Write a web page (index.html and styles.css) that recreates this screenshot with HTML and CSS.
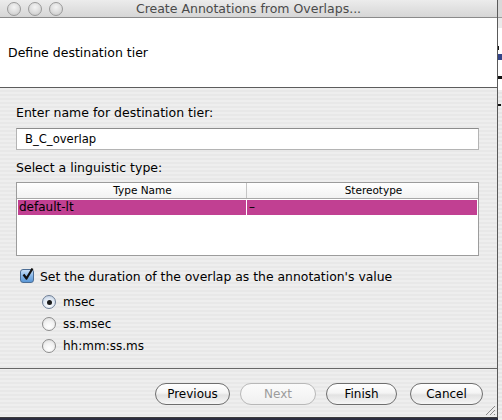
FILE: index.html
```html
<!DOCTYPE html>
<html>
<head>
<meta charset="utf-8">
<link rel="stylesheet" href="styles.css">
</head>
<body>
<div class="screen">
  <div class="window">
    <div class="titlebar">
      <div class="lights">
        <span class="light"></span><span class="light"></span><span class="light"></span>
      </div>
      <div class="title">Create Annotations from Overlaps...</div>
      <div></div>
    </div>
    <div class="header"><span>Define destination tier</span></div>
    <div class="content">
      <div class="label">Enter name for destination tier:</div>
      <div class="field">B_C_overlap</div>
      <div class="label label-second">Select a linguistic type:</div>
      <div class="table">
        <div class="thead">
          <div class="th c1">Type Name</div>
          <div class="th c2">Stereotype</div>
        </div>
        <div class="tbody">
          <div class="row selected">
            <div class="td c1">default-lt</div>
            <div class="td c2">–</div>
          </div>
        </div>
      </div>
      <div class="check-row">
        <span class="checkbox"><svg width="16" height="16" viewBox="0 0 16 16"><path d="M3.5 7.5 L6.5 11.5 L12.5 1.5" fill="none" stroke="#111" stroke-width="2.2" stroke-linejoin="round"/></svg></span>
        <span>Set the duration of the overlap as the annotation's value</span>
      </div>
      <div class="radios">
        <div class="radio-row"><span class="radio on"><span class="dot"></span></span><span>msec</span></div>
        <div class="radio-row"><span class="radio"></span><span>ss.msec</span></div>
        <div class="radio-row"><span class="radio"></span><span>hh:mm:ss.ms</span></div>
      </div>
    </div>
    <div class="footer">
      <button class="btn b-prev">Previous</button>
      <button class="btn b-next" disabled>Next</button>
      <button class="btn b-finish">Finish</button>
      <button class="btn b-cancel">Cancel</button>
      <span class="grip"><svg width="12" height="12" viewBox="0 0 12 12"><path d="M11 2 L2 11 M11 6 L6 11 M11 10 L10 11" stroke="#8a8a8a" stroke-width="1"/></svg></span>
    </div>
  </div>
  <div class="behind">
    <div class="bh-top"></div>
    <div class="bh-white">
      <span class="mk mk1"></span>
      <span class="mk mk2"></span>
      <span class="mk mk3"></span>
    </div>
    <div class="bh-rest">
      <span class="mk mk4"></span>
    </div>
  </div>
</div>
</body>
</html>
```
FILE: styles.css
```css
* { box-sizing: border-box; }
html, body { margin: 0; padding: 0; }
body {
  width: 502px;
  height: 420px;
  overflow: hidden;
  background: #2a2c3e;
  font-family: "DejaVu Sans", sans-serif;
  color: #000;
}
.screen { display: flex; width: 502px; height: 420px; }
.window {
  width: 498px;
  height: 418px;
  display: flex;
  flex-direction: column;
  border-right: 1px solid #5a5a5a;
  border-bottom: 1px solid #3c3c3c;
  background: repeating-linear-gradient(to bottom, #eeeeee 0 2px, #e8e8e8 2px 4px);
}
.titlebar {
  height: 18px;
  flex: none;
  display: grid;
  grid-template-columns: 1fr auto 1fr;
  align-items: center;
  border-bottom: 1px solid #8a8a8a;
  background: linear-gradient(to bottom, #ececec, #d6d6d6);
}
.lights { display: flex; gap: 7px; padding-left: 7px; }
.light {
  width: 14px;
  height: 14px;
  border-radius: 50%;
  border: 1px solid #9a9a9a;
  background: radial-gradient(circle at 50% 35%, #f4f4f4 0, #dcdcdc 55%, #c4c4c4 100%);
}
.title {
  font-size: 12.5px;
  color: #4a4a4a;
  white-space: nowrap;
}
.header {
  height: 70px;
  flex: none;
  background: #fff;
  border-bottom: 1px solid #5c5c5c;
  display: flex;
  align-items: center;
  padding-left: 8px;
  font-size: 12.5px;
}
.content {
  flex: 1;
  border-bottom: 1px solid #666;
  padding: 17px 18px 0 16px;
  display: flex;
  flex-direction: column;
  font-size: 12px;
}
.label { font-size: 12.5px; line-height: 16px; }
.label-second { margin-top: 10px; }
.field {
  margin-top: 7px;
  height: 22px;
  background: #fff;
  border: 1px solid #b4b4b4;
  border-top-color: #8c8c8c;
  padding-left: 8px;
  line-height: 20px;
  font-size: 11.6px;
}
.table {
  margin-top: 6px;
  height: 74px;
  background: #fff;
  border: 1px solid #9c9c9c;
  display: flex;
  flex-direction: column;
}
.thead {
  display: flex;
  height: 16px;
  border-bottom: 1px solid #a8a8a8;
  background: linear-gradient(to bottom, #ffffff, #f2f2f2);
  font-size: 10.5px;
  line-height: 15px;
}
.th { text-align: center; padding-left: 22px; }
.c1 { width: 230px; flex: none; }
.c2 { flex: 1; }
.th.c1 { border-right: 1px solid #c4c4c4; }
.tbody { padding: 1px 1px 0 1px; }
.row { display: flex; height: 15px; gap: 1px; }
.td { line-height: 15px; padding-left: 1px; font-size: 12px; }
.td.c1 { width: 228px; }
.td.c2 { padding-left: 2px; }
.selected .td { background: #c14092; color: #000; }
.check-row {
  margin-top: 12px;
  display: flex;
  align-items: center;
  height: 16px;
  padding-left: 4px;
  gap: 6px;
  font-size: 12.4px;
}
.checkbox {
  position: relative;
  width: 14px;
  height: 14px;
  border-radius: 3px;
  border: 1px solid #4c6d94;
  background: linear-gradient(to bottom, #c8def5 0, #86b6e8 50%, #5a97d6 100%);
  flex: none;
}
.checkbox svg { position: absolute; left: -1px; top: -3px; }
.radios { margin-top: 7px; display: flex; flex-direction: column; padding-left: 26px; }
.radio-row { height: 22px; display: flex; align-items: center; gap: 7px; font-size: 12px; }
.radio {
  width: 14px;
  height: 14px;
  border-radius: 50%;
  border: 1px solid #8c8c8c;
  background: radial-gradient(circle at 50% 70%, #ffffff 0, #f2f2f2 50%, #d8d8d8 100%);
  flex: none;
  display: flex;
  align-items: center;
  justify-content: center;
}
.radio.on {
  border-color: #6f7f96;
  background: radial-gradient(circle at 50% 70%, #ffffff 0, #e2eaf4 50%, #b8c8dc 100%);
}
.dot { width: 5px; height: 5px; border-radius: 50%; background: #1a1a1a; }
.footer {
  position: relative;
  flex: none;
  height: 48px;
  padding: 14px 14px 0 0;
  display: flex;
  justify-content: flex-end;
  align-items: flex-start;
}
.btn {
  height: 22px;
  border-radius: 11px;
  border: 1px solid #6e6e6e;
  background: linear-gradient(to bottom, #ffffff 0, #f4f4f4 45%, #e2e2e2 55%, #f6f6f6 100%);
  font-family: "DejaVu Sans", sans-serif;
  font-size: 12px;
  color: #000;
  padding: 0;
  margin: 0;
  line-height: 20px;
}
.b-prev { width: 75px; }
.b-next { width: 76px; margin-left: 10px; color: #9c9c9c; border-color: #b8b8b8; background: linear-gradient(to bottom, #fbfbfb, #f0f0f0); }
.b-finish { width: 71px; margin-left: 10px; }
.b-cancel { width: 73px; margin-left: 13px; }
.grip { position: absolute; right: 1px; bottom: 1px; width: 12px; height: 12px; display: block; }
.grip svg { display: block; }
.behind { width: 4px; height: 420px; display: flex; flex-direction: column; }
.bh-top { height: 18px; background: #d9d9d9; border-bottom: 1px solid #9a9a9a; }
.bh-white { position: relative; height: 72px; background: #fff; border-top: 10px solid #eaeaea; }
.bh-rest { position: relative; flex: 1; background: repeating-linear-gradient(to bottom, #eeeeee 0 2px, #e6e6e6 2px 4px); }
.mk { position: absolute; left: 0; background: #111; }
.mk1 { top: 18px; width: 1px; height: 4px; }
.mk2 { top: 26px; width: 4px; height: 6px; background: #334488; }
.mk3 { top: 48px; width: 4px; height: 3px; }
.mk4 { top: 14px; width: 3px; height: 2px; }
```
